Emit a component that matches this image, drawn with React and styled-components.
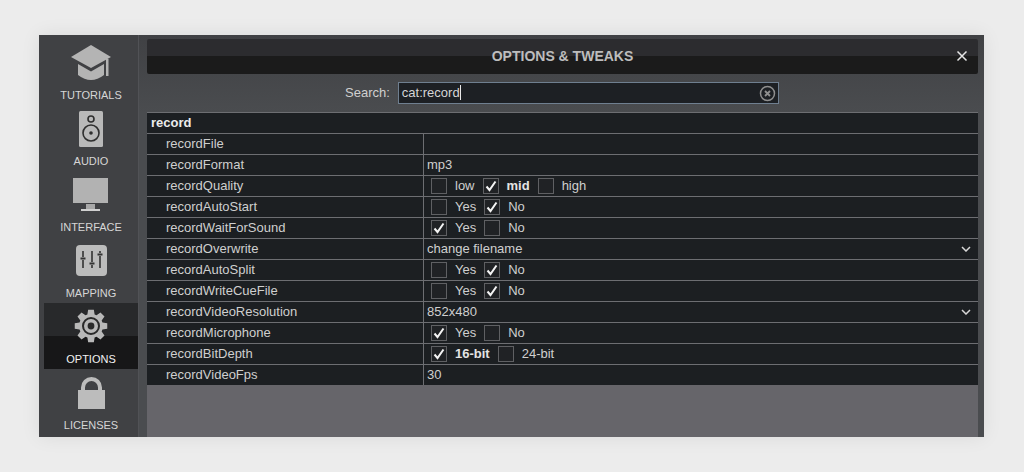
import React from "react";
import styled, { createGlobalStyle } from "styled-components";

const Global = createGlobalStyle`
  html, body { margin: 0; padding: 0; }
  body {
    background: #ececec;
    font-family: "Liberation Sans", Arial, sans-serif;
    width: 1024px;
    height: 472px;
    overflow: hidden;
  }
`;

const Page = styled.div`
  padding: 35px 40px 35px 39px;
  height: 472px;
  box-sizing: border-box;
`;

const Window = styled.div`
  display: flex;
  height: 402px;
  background: #4a494e;
  box-shadow: 0 0 18px rgba(0, 0, 0, 0.08);
`;

const Sidebar = styled.nav`
  width: 100px;
  box-sizing: border-box;
  padding: 4px 0 0 5px;
  background: #404144;
  border-right: 1px solid #515256;
  flex-shrink: 0;
`;

const NavItem = styled.div`
  height: 66px;
  box-sizing: border-box;
  display: flex;
  flex-direction: column;
  align-items: center;
  color: ${(p) => (p.$active ? "#f2f2f2" : "#d6d6d6")};
  font-size: 11px;
  background: ${(p) =>
    p.$active ? "linear-gradient(#28292b 0, #28292b 50%, #171718 50%, #171718 100%)" : "none"};
`;

const NavIcon = styled.div`
  height: 45px;
  padding-top: 2px;
  box-sizing: border-box;
  display: flex;
  justify-content: center;
  align-items: center;
`;

const NavLabel = styled.span`
  margin-top: 4px;
  line-height: 14px;
`;

const Main = styled.div`
  flex: 1;
  padding: 4px 6px 0 8px;
  display: flex;
  flex-direction: column;
  min-width: 0;
  background: linear-gradient(#404144 0, #4a4c4f 77px, #4a4c4f 100%);
`;

const TitleBar = styled.header`
  height: 35px;
  box-sizing: border-box;
  padding-bottom: 2px;
  flex-shrink: 0;
  position: relative;
  display: flex;
  align-items: center;
  justify-content: center;
  border-radius: 2px;
  background: linear-gradient(#2c2c2f 0, #2c2c2f 50%, #1b1b1b 50%, #1b1b1b 100%);
  color: #bdbdbd;
  font-size: 14px;
  font-weight: bold;
`;

const Close = styled.svg`
  position: absolute;
  right: 9px;
  top: 10px;
`;

const SearchRow = styled.div`
  height: 38px;
  flex-shrink: 0;
  display: flex;
  align-items: center;
  padding-left: 198px;
  gap: 8px;
  color: #d0d0d0;
  font-size: 13px;
`;

const SearchLabel = styled.span`
  margin-bottom: 2px;
`;

const SearchBox = styled.div`
  width: 381px;
  height: 22px;
  box-sizing: border-box;
  display: flex;
  align-items: center;
  justify-content: space-between;
  padding: 0 2px 0 3px;
  background: #1d2024;
  border: 1px solid #6f7f90;
  color: #d6d6d6;
`;

const SearchText = styled.span`
  margin-bottom: 2px;
`;

const Caret = styled.span`
  display: inline-block;
  width: 1px;
  height: 15px;
  background: #e8e8e8;
  vertical-align: -3px;
`;

const Table = styled.div`
  display: flex;
  flex-direction: column;
  border-top: 1px solid #6d6e72;
  flex-shrink: 0;
`;

const Row = styled.div`
  height: ${(p) => (p.$last ? "20px" : "21px")};
  box-sizing: border-box;
  display: flex;
  align-items: center;
  background: #1c1f22;
  border-bottom: ${(p) => (p.$last ? "none" : "1px solid #6d6e72")};
  color: #cfcfcf;
  font-size: 13px;
`;

const GroupRow = styled(Row)`
  padding-left: 4px;
  padding-bottom: 1px;
  font-weight: bold;
  color: #ececec;
`;

const NameCell = styled.div`
  width: 277px;
  height: 100%;
  box-sizing: border-box;
  padding-left: 19px;
  line-height: 19px;
  border-right: 1px solid #6d6e72;
  flex-shrink: 0;
`;

const ValueCell = styled.div`
  flex: 1;
  height: 100%;
  box-sizing: border-box;
  padding: 0 7px 1px 3px;
  display: flex;
  align-items: center;
  justify-content: space-between;
`;

const Options = styled.div`
  display: flex;
  align-items: center;
  gap: 8px;
  padding-left: 4px;
`;

const Option = styled.span`
  display: flex;
  align-items: center;
  gap: 8px;
  font-weight: ${(p) => (p.$on && p.$bold ? "bold" : "normal")};
  color: ${(p) => (p.$on && p.$bold ? "#e4e4e4" : "#cfcfcf")};
`;

const Box = styled.span`
  width: 16px;
  height: 16px;
  box-sizing: border-box;
  border: 1px solid #5f6063;
  display: flex;
  align-items: center;
  justify-content: center;
  background: #202225;
`;

const Filler = styled.div`
  flex: 1;
  background: #66656a;
`;

const Tutorials = () => (
  <svg width="42" height="38" viewBox="0 0 42 38">
    <path d="M21 1 L41 13 L21 24 L1 13 Z" fill="#b4b4b4" />
    <path d="M8 20 L21 27.5 L34 20 L34 31 Q21 41 8 31 Z" fill="#b4b4b4" />
    <rect x="36" y="15" width="2.5" height="17" fill="#b4b4b4" />
  </svg>
);

const Audio = () => (
  <svg width="24" height="36" viewBox="0 0 24 36">
    <rect width="24" height="36" rx="1.5" fill="#b9b9b9" />
    <circle cx="12" cy="8" r="3" fill="none" stroke="#2f2f2f" strokeWidth="1.6" />
    <circle cx="12" cy="22" r="8" fill="none" stroke="#2f2f2f" strokeWidth="1.6" />
    <circle cx="12" cy="22" r="1.8" fill="#2f2f2f" />
  </svg>
);

const Interface = () => (
  <svg width="36" height="33" viewBox="0 0 36 33">
    <rect width="35" height="25" fill="#b2b2b2" />
    <rect x="13" y="26" width="9" height="5" fill="#a8a8a8" />
    <rect x="8" y="31" width="19" height="2" fill="#d0d0d0" />
  </svg>
);

const Mapping = () => (
  <svg width="31" height="31" viewBox="0 0 31 31">
    <rect width="31" height="31" rx="4" fill="#bcbcbc" />
    <g stroke="#333" strokeWidth="1.6">
      <path d="M7 6V12M7 15V23M16 6V17M16 20V23M24 6V8M24 11V23" />
      <path d="M4.5 13.5H9.5M13.5 18.5H18.5M21.5 9.5H26.5" strokeWidth="2" />
    </g>
  </svg>
);

const gearPath = () => {
  const teeth = 8;
  const pts = [];
  for (let i = 0; i < teeth; i++) {
    const a = (i / teeth) * Math.PI * 2;
    const step = (Math.PI * 2) / teeth;
    [[-0.3, 12], [-0.17, 16.5], [0.17, 16.5], [0.3, 12]].forEach(([o, r]) => {
      const t = a + o * step * 1.3;
      pts.push(`${(17 + r * Math.sin(t)).toFixed(2)} ${(17 - r * Math.cos(t)).toFixed(2)}`);
    });
  }
  return "M" + pts.join("L") + "Z";
};

const Gear = () => (
  <svg width="34" height="36" viewBox="0 0 34 36">
    <path d={gearPath()} fill="#b8b8b8" />
    <circle cx="17" cy="17" r="8" fill="none" stroke="#2a2a2a" strokeWidth="2" />
    <circle cx="17" cy="17" r="3.4" fill="#2a2a2a" />
  </svg>
);

const Lock = () => (
  <svg width="27" height="32" viewBox="0 0 27 32">
    <path d="M5 15V10.5a8.5 8.5 0 0 1 17 0V15" fill="none" stroke="#bcbcbc" strokeWidth="4" />
    <rect y="13" width="27" height="19" fill="#bcbcbc" />
  </svg>
);

const Check = () => (
  <svg width="14" height="14" viewBox="0 0 14 14">
    <path d="M2.5 7.5 L5.5 11 L11.5 2.5" fill="none" stroke="#f4f4f4" strokeWidth="2" />
  </svg>
);

const Chevron = () => (
  <svg width="10" height="6" viewBox="0 0 10 6">
    <path d="M1 1 L5 5 L9 1" fill="none" stroke="#d8d8d8" strokeWidth="1.5" />
  </svg>
);

const navItems = [
  ["TUTORIALS", Tutorials],
  ["AUDIO", Audio],
  ["INTERFACE", Interface],
  ["MAPPING", Mapping],
  ["OPTIONS", Gear, true],
  ["LICENSES", Lock],
];

const yesNo = (yes) => ({ options: [["Yes", yes], ["No", !yes]] });

const rows = [
  ["recordFile", {}],
  ["recordFormat", { text: "mp3" }],
  ["recordQuality", { bold: true, options: [["low", false], ["mid", true], ["high", false]] }],
  ["recordAutoStart", yesNo(false)],
  ["recordWaitForSound", yesNo(true)],
  ["recordOverwrite", { text: "change filename", select: true }],
  ["recordAutoSplit", yesNo(false)],
  ["recordWriteCueFile", yesNo(false)],
  ["recordVideoResolution", { text: "852x480", select: true }],
  ["recordMicrophone", yesNo(true)],
  ["recordBitDepth", { bold: true, options: [["16-bit", true], ["24-bit", false]] }],
  ["recordVideoFps", { text: "30" }],
];

export default function App() {
  return (
    <>
      <Global />
      <Page>
        <Window>
          <Sidebar>
            {navItems.map(([label, Icon, active]) => (
              <NavItem key={label} $active={active}>
                <NavIcon>
                  <Icon />
                </NavIcon>
                <NavLabel>{label}</NavLabel>
              </NavItem>
            ))}
          </Sidebar>
          <Main>
            <TitleBar>
              OPTIONS &amp; TWEAKS
              <Close width="14" height="14" viewBox="0 0 14 14">
                <path d="M2.5 2.5 L11.5 11.5 M11.5 2.5 L2.5 11.5" stroke="#e6e6e6" strokeWidth="1.5" />
              </Close>
            </TitleBar>
            <SearchRow>
              <SearchLabel>Search:</SearchLabel>
              <SearchBox>
                <SearchText>
                  cat:record
                  <Caret />
                </SearchText>
                <svg width="17" height="17" viewBox="0 0 17 17">
                  <circle cx="8.5" cy="8.5" r="7" fill="none" stroke="#8f8f8f" strokeWidth="1.5" />
                  <path d="M6 6 L11 11 M11 6 L6 11" stroke="#8f8f8f" strokeWidth="1.8" />
                </svg>
              </SearchBox>
            </SearchRow>
            <Table>
              <GroupRow>record</GroupRow>
              {rows.map(([name, v], i) => (
                <Row key={name} $last={i === rows.length - 1}>
                  <NameCell>{name}</NameCell>
                  <ValueCell>
                    {v.text && <span>{v.text}</span>}
                    {v.select && <Chevron />}
                    {v.options && (
                      <Options>
                        {v.options.map(([label, on]) => (
                          <Option key={label} $on={on} $bold={v.bold}>
                            <Box>{on && <Check />}</Box>
                            {label}
                          </Option>
                        ))}
                      </Options>
                    )}
                  </ValueCell>
                </Row>
              ))}
            </Table>
            <Filler />
          </Main>
        </Window>
      </Page>
    </>
  );
}
